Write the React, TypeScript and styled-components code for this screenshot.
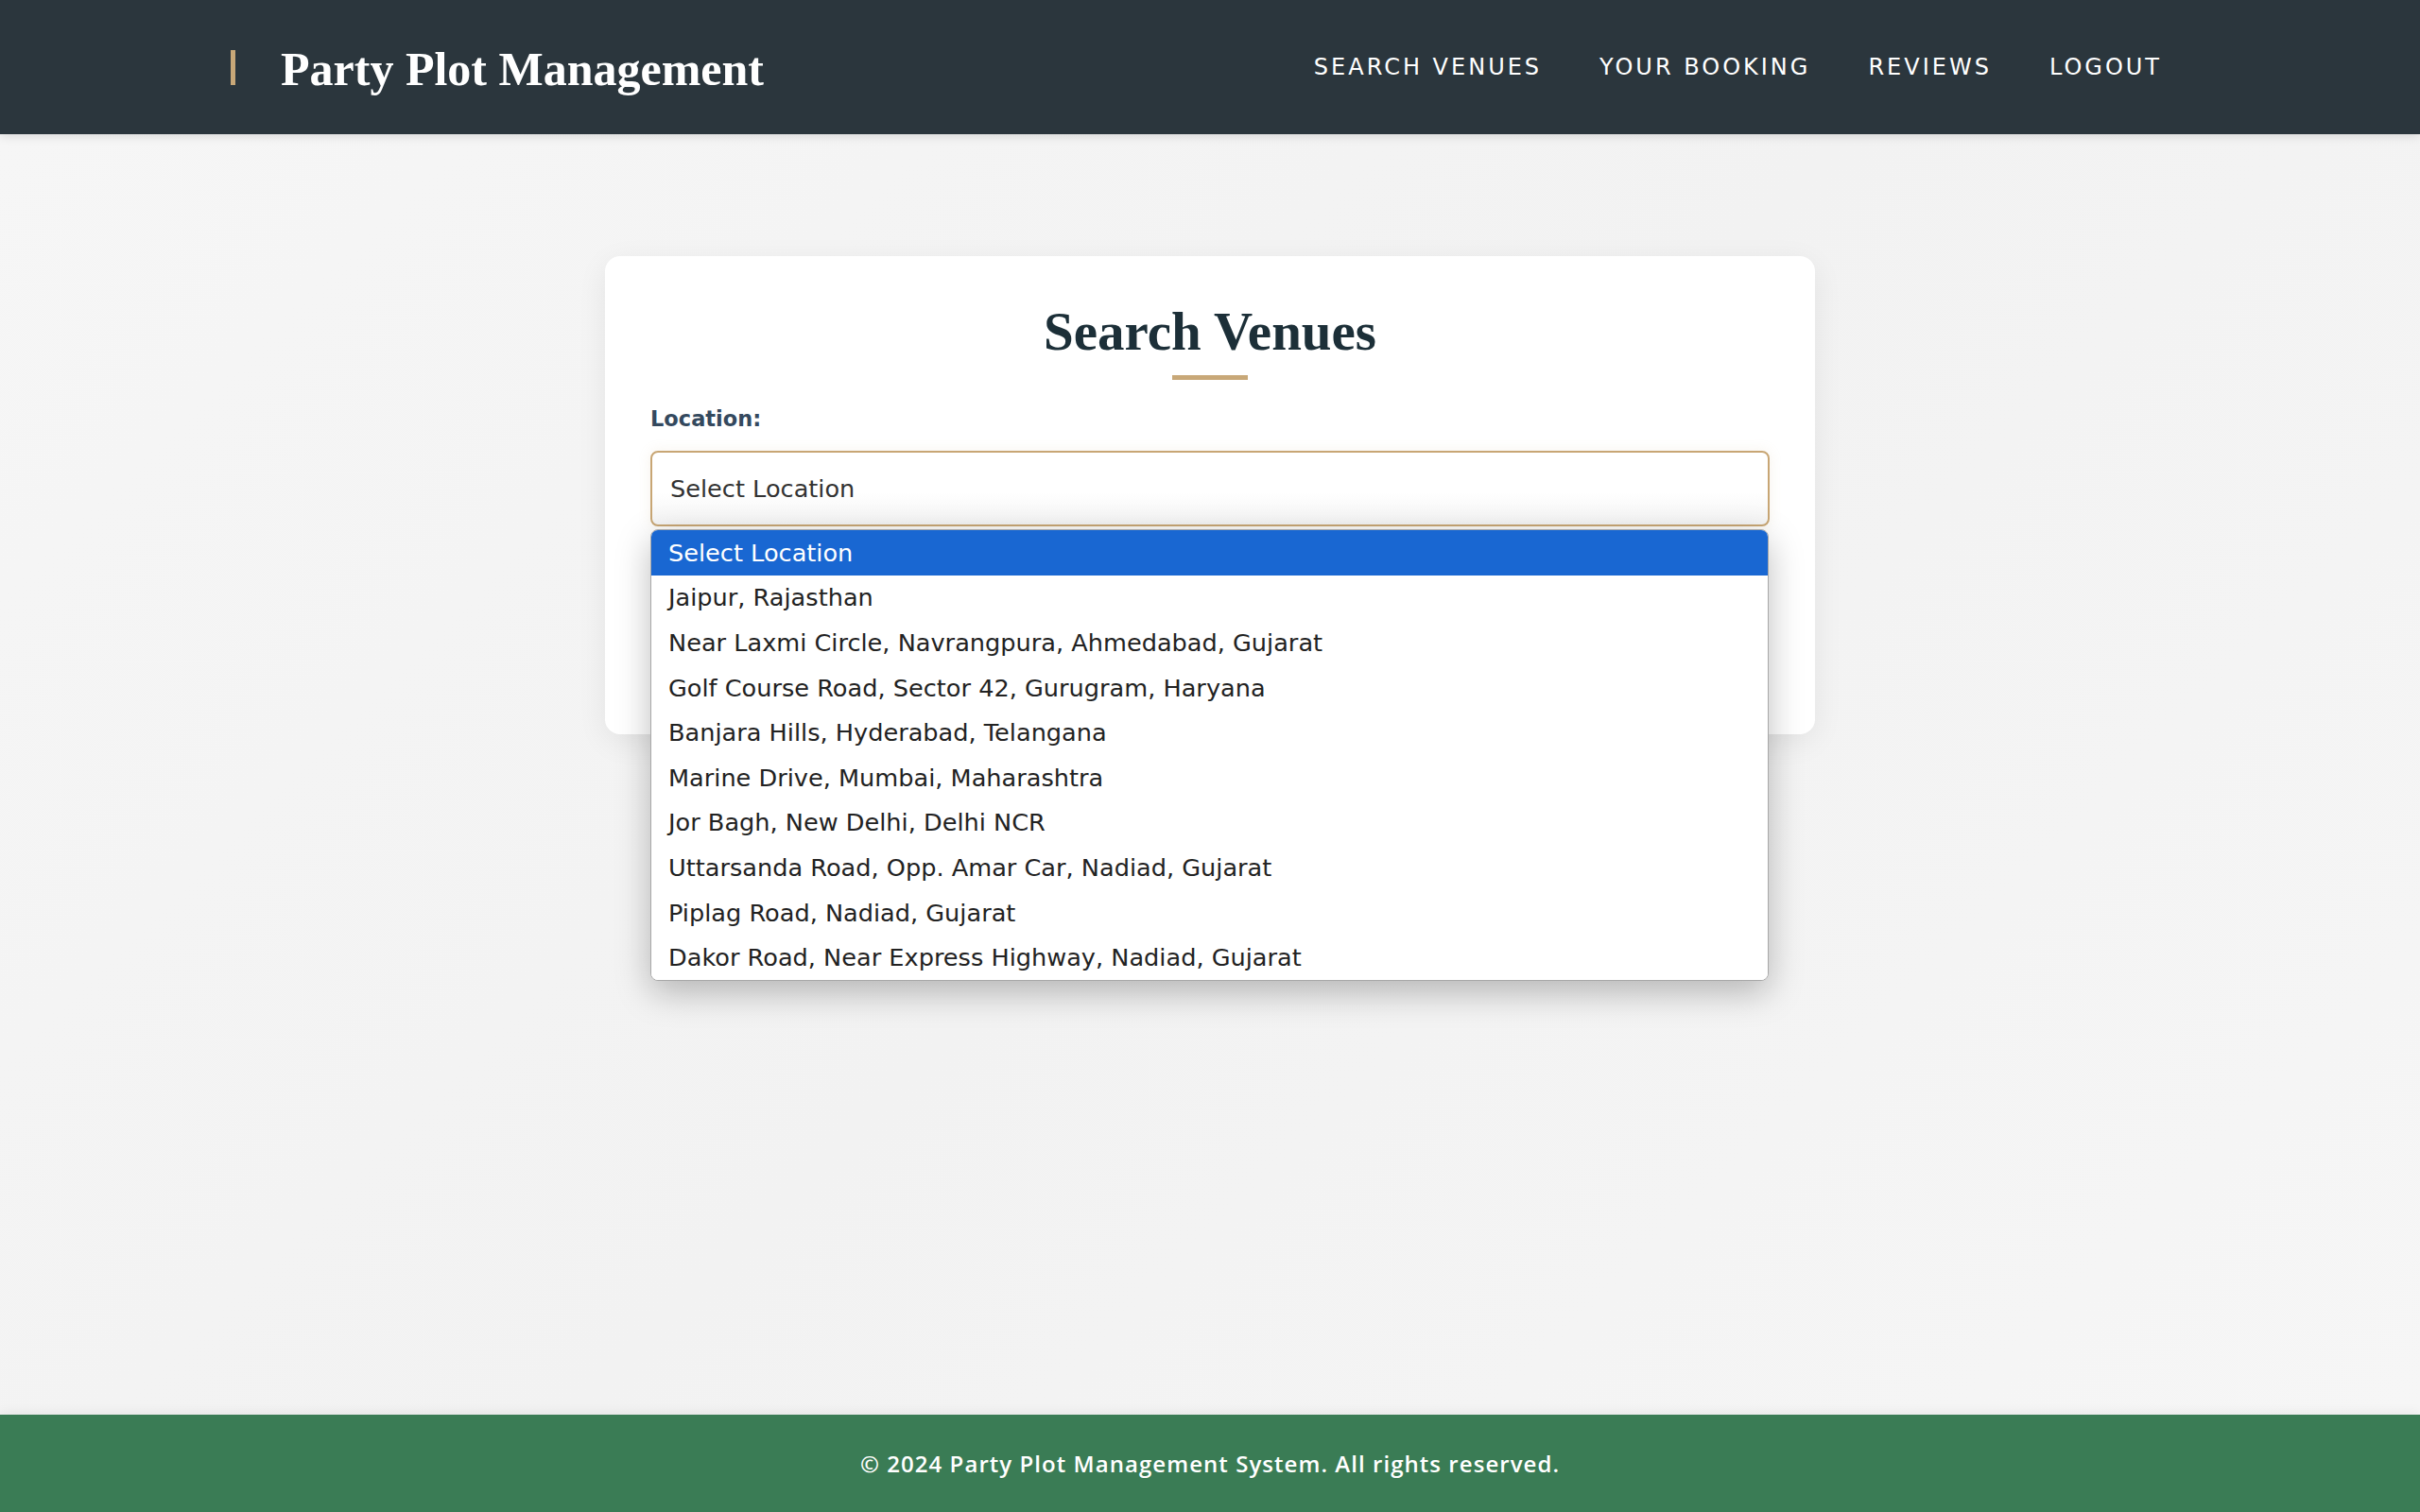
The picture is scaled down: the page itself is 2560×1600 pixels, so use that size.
import React from "react";
import styled, { createGlobalStyle } from "styled-components";

const GlobalStyle = createGlobalStyle`
  html, body { margin: 0; padding: 0; }
  body {
    font-family: "DejaVu Sans", "Open Sans", sans-serif;
    background: #f5f5f5;
    color: #333;
  }
  * { box-sizing: border-box; }
`;

const Page = styled.div`
  min-height: 100vh;
  display: flex;
  flex-direction: column;
`;

const NavBar = styled.header`
  height: 142px;
  background: #2b363d;
  display: flex;
  align-items: center;
  justify-content: space-between;
  padding: 0 273px 0 244px;
  box-shadow: 0 2px 10px rgba(0, 0, 0, 0.12);
  position: relative;
  z-index: 2;
`;

const Brand = styled.div`
  display: flex;
  align-items: center;
  &::before {
    content: "";
    width: 5px;
    height: 37px;
    background: #c8a878;
    margin-right: 48px;
  }
`;

const BrandText = styled.h1`
  margin: 0;
  padding-top: 4px;
  font-family: "Liberation Serif", "Times New Roman", serif;
  font-weight: 700;
  font-size: 50px;
  color: #ffffff;
`;

const NavLinks = styled.nav`
  display: flex;
  align-items: center;
  gap: 61px;
`;

const NavLink = styled.a`
  font-family: "DejaVu Sans", sans-serif;
  font-size: 24px;
  letter-spacing: 3px;
  color: #ffffff;
  text-decoration: none;
  text-transform: uppercase;
`;

const Main = styled.main`
  flex: 1;
  background: linear-gradient(135deg, #f6f6f6 0%, #f2f2f2 50%, #f6f6f6 100%);
  padding-top: 129px;
`;

const Card = styled.section`
  width: 1280px;
  min-height: 506px;
  margin: 0 auto;
  background: #ffffff;
  border-radius: 16px;
  padding: 48px;
  box-shadow: 0 8px 32px rgba(0, 0, 0, 0.07);
`;

const Title = styled.h2`
  margin: 0;
  text-align: center;
  font-family: "Liberation Serif", "Times New Roman", serif;
  font-weight: 700;
  font-size: 57px;
  line-height: 64px;
  color: #1c2f38;
`;

const Underline = styled.div`
  width: 80px;
  height: 5px;
  background: #c8a878;
  margin: 14px auto 28px;
`;

const Label = styled.label`
  display: block;
  font-family: "DejaVu Sans", sans-serif;
  font-weight: 700;
  font-size: 22.5px;
  line-height: 27px;
  color: #34495e;
  margin-bottom: 20px;
`;

const SelectWrap = styled.div`
  position: relative;
`;

const SelectBox = styled.div`
  height: 80px;
  border: 2px solid #c8a674;
  border-radius: 8px;
  padding: 0 19px;
  display: flex;
  align-items: center;
  font-size: 25.6px;
  color: #333;
  background: linear-gradient(#ffffff 55%, #f4f4f4 100%);
  box-shadow: 0 0 14px rgba(200, 168, 120, 0.14);
`;

const Dropdown = styled.ul`
  position: absolute;
  top: calc(100% + 3px);
  left: 0;
  right: 1px;
  margin: 0;
  padding: 0;
  list-style: none;
  background: #ffffff;
  border: 1px solid #a8a8a8;
  border-radius: 8px;
  overflow: hidden;
  box-shadow: 0 12px 36px rgba(0, 0, 0, 0.26);
  z-index: 5;
`;

const Option = styled.li<{ $active?: boolean }>`
  height: 47.6px;
  display: flex;
  align-items: center;
  padding: 0 18px;
  font-size: 25.6px;
  color: ${(p) => (p.$active ? "#ffffff" : "#222222")};
  background: ${(p) => (p.$active ? "#1967d2" : "#ffffff")};
  white-space: nowrap;
`;

const Footer = styled.footer`
  height: 103px;
  background: #3a7c55;
  display: flex;
  align-items: center;
  justify-content: center;
  box-shadow: 0 -2px 12px rgba(0, 0, 0, 0.06);
`;

const FooterText = styled.p`
  margin: 0;
  font-family: "Open Sans", sans-serif;
  font-weight: 600;
  font-size: 24px;
  letter-spacing: 1.05px;
  color: #ffffff;
`;

const locations = [
  "Select Location",
  "Jaipur, Rajasthan",
  "Near Laxmi Circle, Navrangpura, Ahmedabad, Gujarat",
  "Golf Course Road, Sector 42, Gurugram, Haryana",
  "Banjara Hills, Hyderabad, Telangana",
  "Marine Drive, Mumbai, Maharashtra",
  "Jor Bagh, New Delhi, Delhi NCR",
  "Uttarsanda Road, Opp. Amar Car, Nadiad, Gujarat",
  "Piplag Road, Nadiad, Gujarat",
  "Dakor Road, Near Express Highway, Nadiad, Gujarat",
];

export default function App() {
  return (
    <Page>
      <GlobalStyle />
      <NavBar>
        <Brand>
          <BrandText>Party Plot Management</BrandText>
        </Brand>
        <NavLinks>
          <NavLink href="#">Search Venues</NavLink>
          <NavLink href="#">Your Booking</NavLink>
          <NavLink href="#">Reviews</NavLink>
          <NavLink href="#">Logout</NavLink>
        </NavLinks>
      </NavBar>
      <Main>
        <Card>
          <Title>Search Venues</Title>
          <Underline />
          <Label>Location:</Label>
          <SelectWrap>
            <SelectBox>Select Location</SelectBox>
            <Dropdown>
              {locations.map((loc, i) => (
                <Option key={loc} $active={i === 0}>
                  {loc}
                </Option>
              ))}
            </Dropdown>
          </SelectWrap>
        </Card>
      </Main>
      <Footer>
        <FooterText>© 2024 Party Plot Management System. All rights reserved.</FooterText>
      </Footer>
    </Page>
  );
}
